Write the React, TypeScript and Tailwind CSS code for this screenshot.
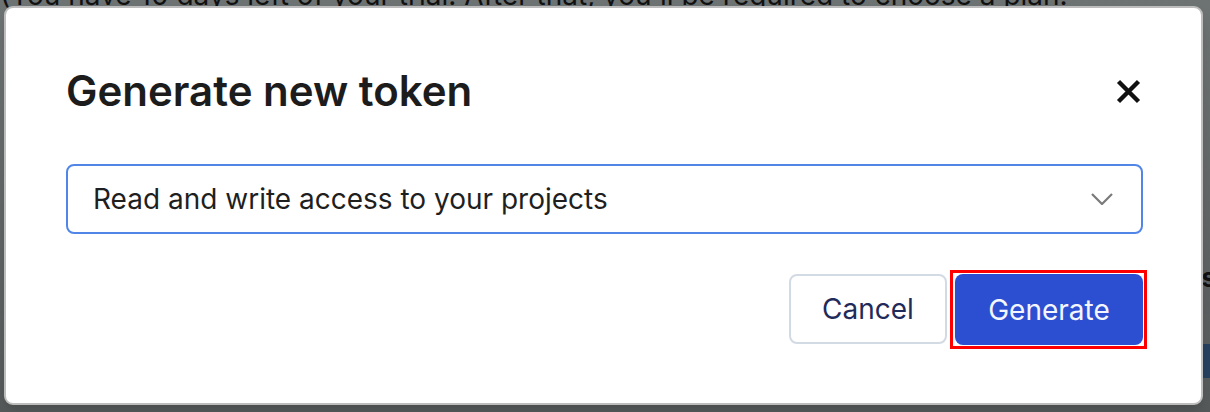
function Backdrop() {
  return (
    <div className="absolute inset-0 bg-gradient-to-b from-[#6d7272] to-[#565959] font-['Inter',sans-serif]">
      <div className="absolute left-0 top-[-26px] whitespace-nowrap text-[28px] text-[#111]">
        (You have 10 days left of your trial. After that, you'll be required to choose a plan.
      </div>
      <div className="absolute left-[-9px] top-[26px] text-[26px] text-[#111]">(</div>
      <div className="absolute right-[-6px] top-[258px] text-[26px] font-bold text-[#111]">s</div>
      <div className="absolute left-0 right-0 top-[311px] h-[3px] bg-[#5a5e60]" />
      <div className="absolute right-[-20px] top-[344px] h-[34px] w-[40px] rounded bg-[#27405f]" />
      <div className="absolute left-[-9px] top-[340px] text-[26px] text-[#111]">(</div>
    </div>
  )
}

function TokenModal() {
  return (
    <div className="relative flex h-[399px] w-[1199px] flex-col rounded-[9px] border-2 border-[#bdbdbd] bg-white pl-[60px] pr-[58px] pt-[58px] shadow-lg">
      <div className="flex items-center justify-between">
        <h2 className="text-[42px] font-semibold leading-[50px] text-[#1c1c1c]">Generate new token</h2>
        <button className="mr-[2px] text-[#111]">
          <svg width="25" height="25" viewBox="0 0 25 25" fill="none" stroke="currentColor" strokeWidth="4.4">
            <path d="M2.5 2.5 L22.5 22.5 M22.5 2.5 L2.5 22.5" />
          </svg>
        </button>
      </div>

      <div className="mt-[48px] flex h-[70px] items-center justify-between rounded-[8px] border-2 border-[#5285e8] pl-[25px] pr-[28px]">
        <span className="text-[28px] text-[#1f1f1f]">Read and write access to your projects</span>
        <svg width="22" height="12" viewBox="0 0 22 12" fill="none" stroke="#7a7a7a" strokeWidth="2.2">
          <path d="M1 1 L11 11 L21 1" />
        </svg>
      </div>

      <div className="mt-[40px] flex justify-end gap-[8px]">
        <button className="h-[70px] w-[158px] rounded-[8px] border-2 border-[#d2dae4] bg-white text-[28px] text-[#1f2b5b]">
          Cancel
        </button>
        <div className="relative">
          <button className="h-[71px] w-[188px] rounded-[8px] bg-[#2c4fd1] text-[28px] text-[#f4f6ff]">
            Generate
          </button>
          <div className="pointer-events-none absolute left-[-5px] top-[-4px] h-[79px] w-[197px] border-[3px] border-[#ff0000]" />
        </div>
      </div>
    </div>
  )
}

export default function App() {
  return (
    <div className="relative h-[412px] w-[1210px] overflow-hidden font-['Inter',sans-serif]">
      <Backdrop />
      <div className="relative pl-[4px] pt-[6px]">
        <TokenModal />
      </div>
    </div>
  )
}
